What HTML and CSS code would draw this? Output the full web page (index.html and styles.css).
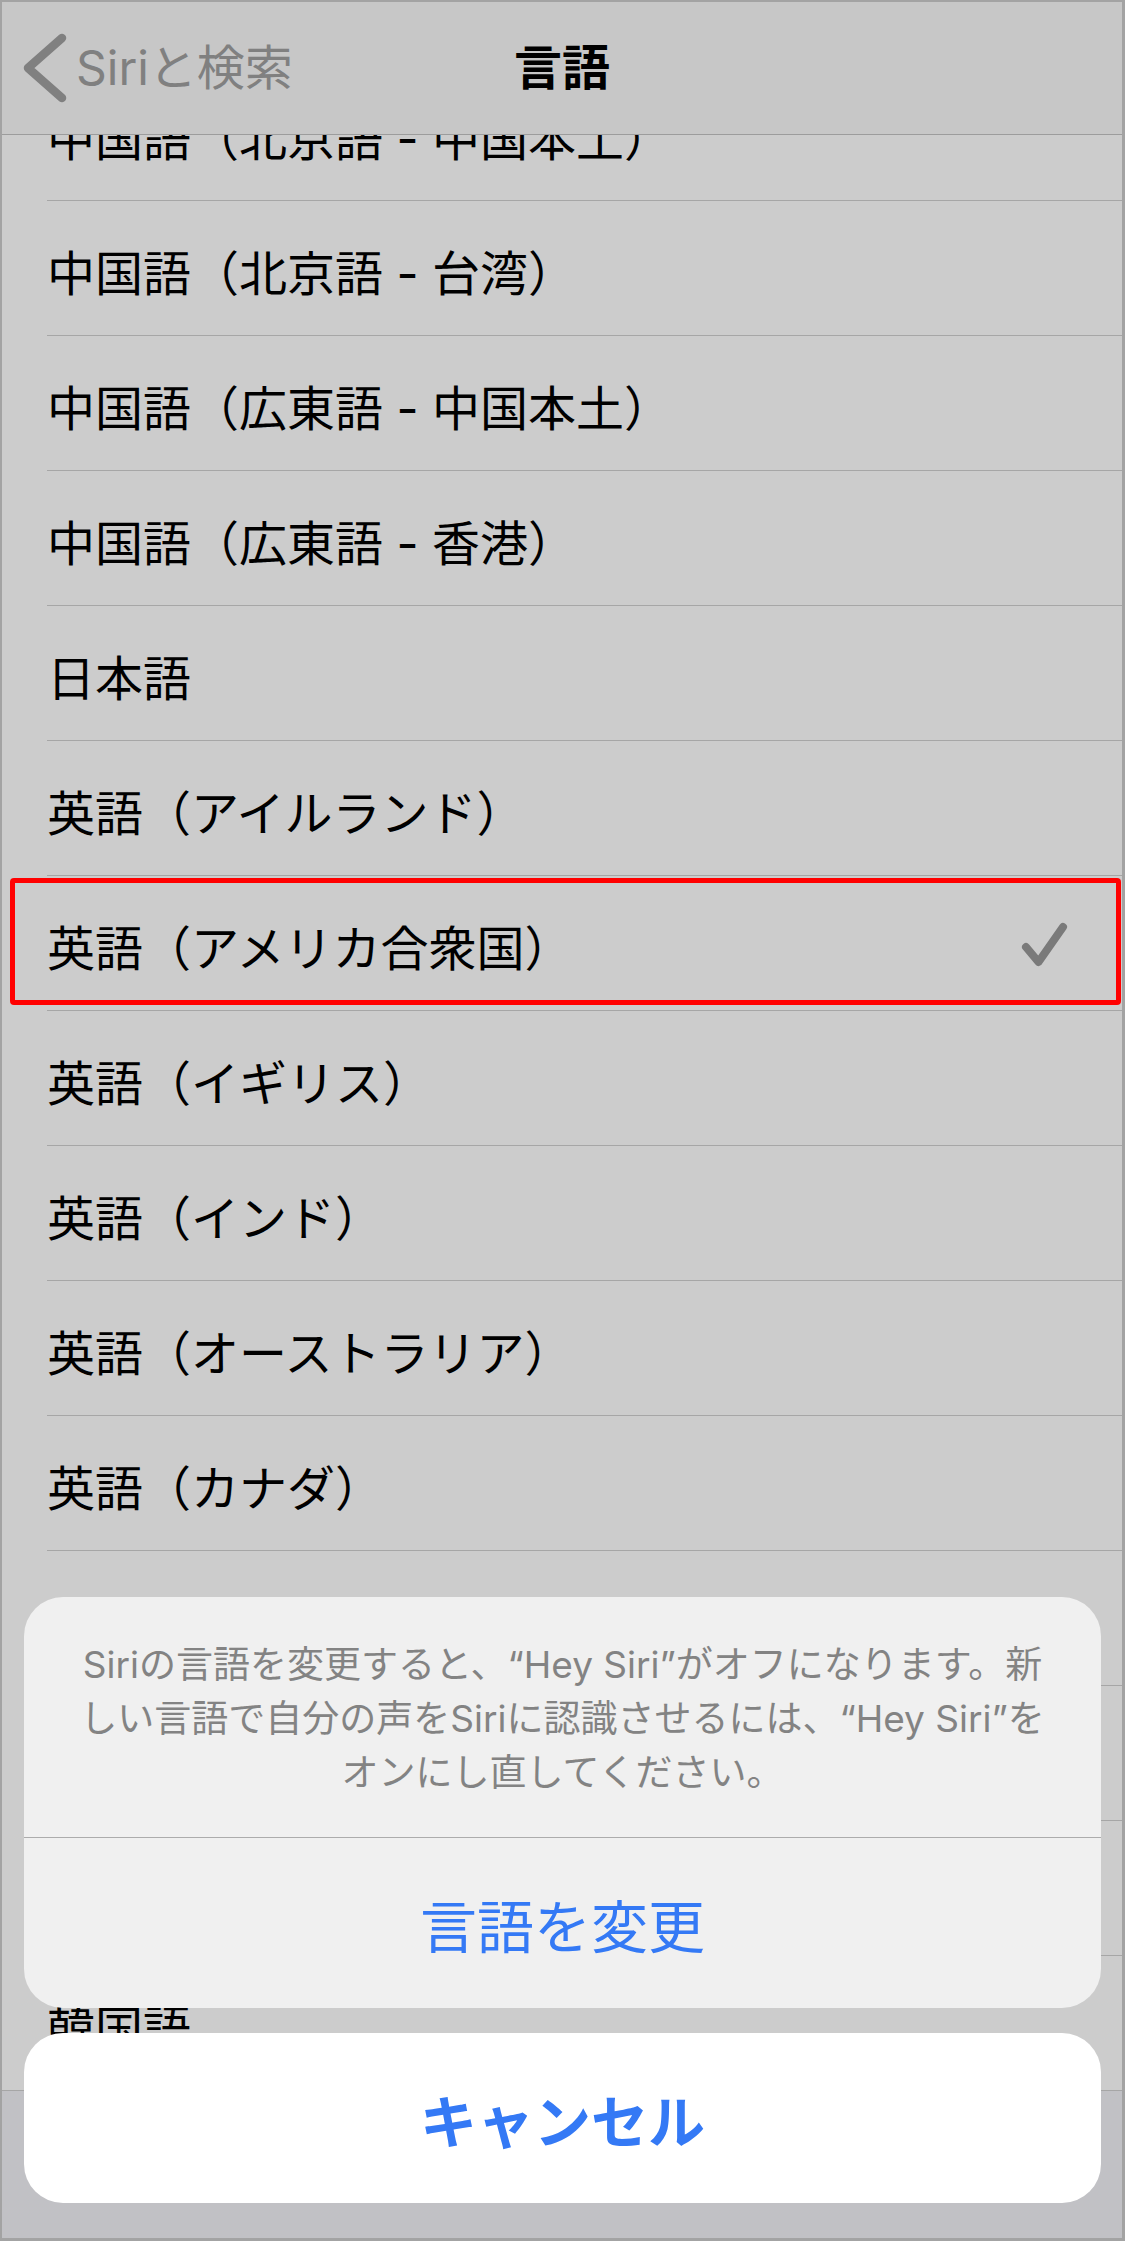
FILE: index.html
```html
<!DOCTYPE html>
<html lang="ja">
<head>
    <meta charset="UTF-8">
    <meta name="viewport" content="width=device-width, initial-scale=1.0">
    <title>言語</title>
    <link rel="stylesheet" href="styles.css">
</head>
<body>
<div class="screen">

    <ul class="langlist">
        <li class="item"><div class="line"><span class="name">中国語（北京語 - 中国本土）</span></div></li>
        <li class="item"><div class="line"><span class="name">中国語（北京語 - 台湾）</span></div></li>
        <li class="item"><div class="line"><span class="name">中国語（広東語 - 中国本土）</span></div></li>
        <li class="item"><div class="line"><span class="name">中国語（広東語 - 香港）</span></div></li>
        <li class="item"><div class="line"><span class="name">日本語</span></div></li>
        <li class="item"><div class="line"><span class="name">英語（アイルランド）</span></div></li>
        <li class="item selected">
            <div class="line">
                <span class="name">英語（アメリカ合衆国）</span>
                <svg class="check" viewBox="0 0 50 50" width="50" height="50">
                    <path d="M6 27 L18.5 42 L43 7" fill="none" stroke="#7a7a7a" stroke-width="8" stroke-linecap="round" stroke-linejoin="round"/>
                </svg>
            </div>
            <div class="mark"></div>
        </li>
        <li class="item"><div class="line"><span class="name">英語（イギリス）</span></div></li>
        <li class="item"><div class="line"><span class="name">英語（インド）</span></div></li>
        <li class="item"><div class="line"><span class="name">英語（オーストラリア）</span></div></li>
        <li class="item"><div class="line"><span class="name">英語（カナダ）</span></div></li>
        <!-- rows hidden behind the sheet -->
        <li class="item"><div class="line"></div></li>
        <li class="item"><div class="line"></div></li>
        <li class="item"><div class="line"></div></li>
        <li class="item last"><div class="line"><span class="name">韓国語</span></div></li>
    </ul>

    <div class="navbar">
        <div class="back">
            <svg class="chevron" viewBox="0 0 45 70" width="45" height="70">
                <path d="M40 5 L6 35 L40 65" fill="none" stroke="#808080" stroke-width="8.5" stroke-linecap="round" stroke-linejoin="round"/>
            </svg>
            <span>Siriと検索</span>
        </div>
        <div class="title">言語</div>
        <div></div>
    </div>

    <div class="sheet">
        <div class="group">
            <p class="msg">
                <span>Siriの言語を変更すると、“Hey Siri”がオフになります。新</span>
                <span>しい言語で自分の声をSiriに認識させるには、“Hey Siri”を</span>
                <span>オンにし直してください。</span>
            </p>
            <button class="action" type="button">言語を変更</button>
        </div>
        <button class="cancel" type="button">キャンセル</button>
    </div>

</div>
</body>
</html>
```

FILE: styles.css
```css
*{
    box-sizing: border-box;
    margin: 0;
}
body{
    font-family: "Inter", "Noto Sans CJK JP", sans-serif;
    background-color: #c1c1c5;
}
.screen{
    width: 1125px;
    height: 2241px;
    border: solid #a3a3a3;
    border-width: 2px 3px 3px 2px;
    background-color: #c1c1c5;
    position: relative;
    overflow: hidden;
}

/* list behind the sheet */
.langlist{
    list-style: none;
    padding: 0;
    margin-top: 64px;
    background-color: #cccccc;
}
.item{
    height: 135px;
    padding-left: 45px;
    position: relative;
}
.line{
    height: 100%;
    display: flex;
    align-items: center;
    justify-content: space-between;
    padding-top: 11px;
    padding-right: 52px;
    border-bottom: 1px solid #a6a6a6;
}
.name{
    font-size: 48px;
    line-height: 60px;
    color: #000;
}
.check{
    display: block;
    margin-top: -8px;
}
.item.last{
    border-bottom: 1px solid #a6a6a6;
}
.item.last .line{
    border-bottom: none;
}
.mark{
    position: absolute;
    top: 2px;
    bottom: 6px;
    left: 8px;
    right: 1px;
    border: 5px solid #ff0000;
    border-radius: 4px;
}

/* navigation bar */
.navbar{
    position: absolute;
    top: 0;
    left: 0;
    right: 0;
    height: 133px;
    background-color: #c7c7c7;
    border-bottom: 1px solid #9c9c9c;
    display: grid;
    grid-template-columns: 1fr auto 1fr;
    align-items: center;
}
.back{
    display: flex;
    align-items: center;
    padding-left: 20px;
    color: #808080;
    font-size: 48px;
    line-height: 60px;
}
.chevron{
    display: block;
    margin-right: 9px;
}
.title{
    font-size: 48px;
    line-height: 60px;
    font-weight: 700;
    color: #000;
}

/* action sheet */
.sheet{
    position: absolute;
    left: 22px;
    right: 21px;
    bottom: 35px;
    display: flex;
    flex-direction: column;
    gap: 25px;
}
.group{
    background-color: #f0f0f0;
    border-radius: 39px;
    overflow: hidden;
}
.msg{
    padding: 41px 20px 37px;
    border-bottom: 1px solid #acacac;
    text-align: center;
    color: #838383;
    font-size: 37px;
    line-height: 54px;
}
.msg span{
    display: block;
    white-space: nowrap;
}
.action,.cancel{
    display: block;
    width: 100%;
    height: 170px;
    border: none;
    outline: none;
    padding: 0;
    font-family: inherit;
    font-size: 57px;
    color: #3479f5;
    background-color: transparent;
}
.cancel{
    background-color: #ffffff;
    border-radius: 39px;
    font-weight: 700;
}
```
